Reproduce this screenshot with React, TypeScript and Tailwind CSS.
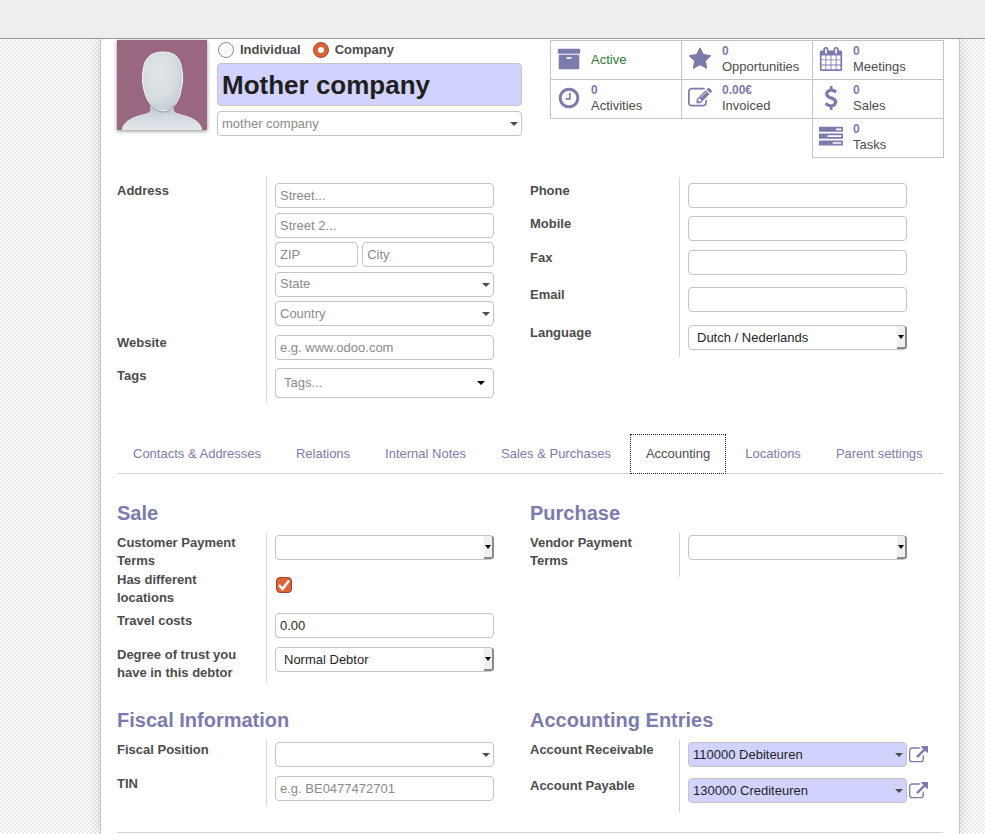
import { useId, type ReactNode } from "react";

const ICONS = {
  archive:
    "M1088 832q0-26-19-45t-45-19h-256q-26 0-45 19t-19 45 19 45 45 19h256q26 0 45-19t19-45zm576-192v960q0 26-19 45t-45 19h-1408q-26 0-45-19t-19-45v-960q0-26 19-45t45-19h1408q26 0 45 19t19 45zm64-448v256q0 26-19 45t-45 19h-1536q-26 0-45-19t-19-45v-256q0-26 19-45t45-19h1536q26 0 45 19t19 45z",
  star: "M1728 647q0 22-26 48l-363 354 86 500q1 7 1 20 0 21-10.5 35.5t-30.5 14.5q-19 0-40-12l-449-236-449 236q-22 12-40 12-21 0-31.5-14.5t-10.5-35.5q0-6 2-20l86-500-364-354q-25-27-25-48 0-37 56-46l502-73 225-455q19-41 49-41t49 41l225 455 502 73q56 9 56 46z",
  clock:
    "M1024 544v448q0 14-9 23t-23 9h-320q-14 0-23-9t-9-23v-64q0-14 9-23t23-9h224v-352q0-14 9-23t23-9h64q14 0 23 9t9 23zm416 352q0-148-73-273t-198-198-273-73-273 73-198 198-73 273 73 273 198 198 273 73 273-73 198-198 73-273zm224 0q0 209-103 385.5t-279.5 279.5-385.5 103-385.5-103-279.5-279.5-103-385.5 103-385.5 279.5-279.5 385.5-103 385.5 103 279.5 279.5 103 385.5z",
  pencil:
    "M888 1184l116-116-152-152-116 116v56h96v96h56zm440-720q-16-16-33 1l-350 350q-17 17-1 33t33-1l350-350q17-17 1-33zm80 594v190q0 119-84.5 203.5t-203.5 84.5h-832q-119 0-203.5-84.5t-84.5-203.5v-832q0-119 84.5-203.5t203.5-84.5h832q63 0 117 25 15 7 18 23 3 17-9 29l-49 49q-14 14-32 8-23-6-45-6h-832q-66 0-113 47t-47 113v832q0 66 47 113t113 47h832q66 0 113-47t47-113v-126q0-13 9-22l64-64q15-15 35-7t20 29zm-96-738l288 288-672 672h-288v-288zm444 132l-92 92-288-288 92-92q28-28 68-28t68 28l152 152q28 28 28 68t-28 68z",
  calendar:
    "M192 1664h288v-288h-288v288zm352 0h320v-288h-320v288zm-352-352h288v-320h-288v320zm352 0h320v-320h-320v320zm-352-384h288v-288h-288v288zm736 736h320v-288h-320v288zm-384-736h320v-288h-320v288zm768 736h288v-288h-288v288zm-384-352h320v-320h-320v320zm-352-864v-288q0-13-9.5-22.5t-22.5-9.5h-64q-13 0-22.5 9.5t-9.5 22.5v288q0 13 9.5 22.5t22.5 9.5h64q13 0 22.5-9.5t9.5-22.5zm736 864h288v-320h-288v320zm-384-384h320v-288h-320v288zm384 0h288v-288h-288v288zm32-480v-288q0-13-9.5-22.5t-22.5-9.5h-64q-13 0-22.5 9.5t-9.5 22.5v288q0 13 9.5 22.5t22.5 9.5h64q13 0 22.5-9.5t9.5-22.5zm384-64v1280q0 52-38 90t-90 38h-1408q-52 0-90-38t-38-90v-1280q0-52 38-90t90-38h128v-96q0-66 47-113t113-47h64q66 0 113 47t47 113v96h384v-96q0-66 47-113t113-47h64q66 0 113 47t47 113v96h128q52 0 90 38t38 90z",
  dollar:
    "M1362 1185q0 153-99.5 263.5t-258.5 136.5v175q0 14-9 23t-23 9h-135q-13 0-22.5-9.5t-9.5-22.5v-175q-66-9-127.5-31t-101.5-44.5-74-48-46.5-37.5-17.5-18q-17-21-2-41l103-135q7-10 23-12 15-2 24 9l2 2q113 99 243 125 37 8 74 8 81 0 142.5-43t61.5-122q0-28-15-53t-33.5-42-58.5-37.5-66-32-80-32.5q-39-16-61.5-25t-61.5-26.5-62.5-31-56.5-35.5-53.5-42.5-43.5-49-35.5-58-21-66.5-8.5-78q0-138 98-242t255-134v-180q0-13 9.5-22.5t22.5-9.5h135q14 0 23 9t9 23v176q57 6 110.5 23t87 33.5 63.5 37.5 39 29 15 14q17 18 5 38l-81 146q-8 15-23 16-14 3-27-7-3-3-14.5-12t-39-26.5-58.5-32-74.5-26-85.5-11.5q-95 0-155 43t-60 111q0 26 8.5 48t29.5 41.5 39.5 33 56 31 60.5 27 70 27.5q53 20 81 31.5t76 35 75.5 42.5 62 50 53 63.5 31.5 76.5 13 94z",
  tasks:
    "M1024 1408h640v-128h-640v128zm-384-512h1024v-128h-1024v128zm640-512h384v-128h-384v128zm512 832v256q0 26-19 45t-45 19h-1664q-26 0-45-19t-19-45v-256q0-26 19-45t45-19h1664q26 0 45 19t19 45zm0-512v256q0 26-19 45t-45 19h-1664q-26 0-45-19t-19-45v-256q0-26 19-45t45-19h1664q26 0 45 19t19 45zm0-512v256q0 26-19 45t-45 19h-1664q-26 0-45-19t-19-45v-256q0-26 19-45t45-19h1664q26 0 45 19t19 45z",
  external:
    "M1408 928v320q0 119-84.5 203.5t-203.5 84.5h-832q-119 0-203.5-84.5t-84.5-203.5v-832q0-119 84.5-203.5t203.5-84.5h704q14 0 23 9t9 23v64q0 14-9 23t-23 9h-704q-66 0-113 47t-47 113v832q0 66 47 113t113 47h832q66 0 113-47t47-113v-320q0-14 9-23t23-9h64q14 0 23 9t9 23zm384-864v512q0 26-19 45t-45 19-45-19l-176-176-652 652q-10 10-23 10t-23-10l-114-114q-10-10-10-23t10-23l652-652-176-176q-19-19-19-45t19-45 45-19h512q26 0 45 19t19 45z",
};

type IconName = keyof typeof ICONS;

function Icon({ name, className }: { name: IconName; className: string }) {
  return (
    <svg viewBox="0 0 1792 1792" className={className} fill="currentColor" aria-hidden="true">
      <path d={ICONS[name]} />
    </svg>
  );
}

const BOX = "rounded-[4px] border border-[#c4c4c4] text-[13px]";

function TextField({
  id,
  label,
  placeholder,
  value,
  width = "w-full",
}: {
  id?: string;
  label?: string;
  placeholder?: string;
  value?: string;
  width?: string;
}) {
  return (
    <input
      id={id}
      type="text"
      aria-label={label}
      placeholder={placeholder}
      defaultValue={value}
      className={`${BOX} ${width} block h-[25px] min-w-0 bg-white px-1 text-[#1f1f1f] placeholder:text-[#8a8a8a]`}
    />
  );
}

/* Drop-down with a small flat caret. */
function Combo({
  id,
  label,
  value,
  tone = "muted",
  tall = false,
}: {
  id?: string;
  label?: string;
  value: string;
  tone?: "muted" | "required";
  tall?: boolean;
}) {
  const colors = tone === "required" ? "bg-[#d2d2ff] text-[#1f1f1f]" : "bg-white text-[#8a8a8a]";
  const size = tall ? "h-[30px] pl-2" : "h-[25px] pl-1";
  return (
    <div className="relative w-full">
      <select id={id} aria-label={label} className={`${BOX} ${colors} ${size} block w-full appearance-none pr-5`}>
        <option>{value}</option>
      </select>
      <svg
        viewBox="0 0 8 4"
        className={
          tall
            ? "pointer-events-none absolute top-[13px] right-[9px] h-1 w-2 text-black"
            : "pointer-events-none absolute top-[11px] right-1 h-1 w-2 text-[#4c4c4c]"
        }
        fill="currentColor"
        aria-hidden="true"
      >
        <path d="M0 0h8L4 4z" />
      </svg>
    </div>
  );
}

/* Drop-down with a bevelled button at its right end. */
function Select({ id, value }: { id?: string; value: string }) {
  return (
    <div className="relative w-full">
      <select id={id} className={`${BOX} block h-[25px] w-full appearance-none bg-white pr-5 pl-2 text-[#1f1f1f]`}>
        <option>{value}</option>
      </select>
      <span className="pointer-events-none absolute top-px right-0 flex h-[23px] w-[10px] items-center justify-center rounded-r-[3px] border-r-2 border-b-2 border-[#8c8c8c] bg-[#f0f0f0]">
        <svg viewBox="0 0 6 4" className="h-1 w-1.5" aria-hidden="true">
          <path d="M0 0h6L3 4z" />
        </svg>
      </span>
    </div>
  );
}

function Group({ className = "", children }: { className?: string; children: ReactNode }) {
  return (
    <div
      className={`self-start bg-[linear-gradient(#d5d5d5,#d5d5d5)] bg-[length:1px_100%] bg-[position:149px_0] bg-no-repeat ${className}`}
    >
      {children}
    </div>
  );
}

function Row({
  label,
  height = "",
  after,
  children,
}: {
  label: string;
  height?: string;
  after?: ReactNode;
  children: (id: string) => ReactNode;
}) {
  const id = useId();
  return (
    <div className={`grid grid-cols-[150px_minmax(0,1fr)_36px] items-start ${height}`}>
      <label htmlFor={id} className="pr-4 font-bold">
        {label}
      </label>
      <div className="pt-px pl-2">{children(id)}</div>
      <div className="pt-[5px] pl-0.5">{after}</div>
    </div>
  );
}

function OpenRecord({ label }: { label: string }) {
  return (
    <button type="button" aria-label={label} className="block text-[#7c7bad]">
      <Icon name="external" className="h-[19px] w-[19px]" />
    </button>
  );
}

function Heading({ children }: { children: ReactNode }) {
  return <h2 className="text-[20px] leading-[39px] font-bold text-[#7c7bad]">{children}</h2>;
}

function Avatar() {
  return (
    <svg
      viewBox="0 0 90 90"
      className="h-[90px] w-[90px] shrink-0 shadow-[0_1px_4px_rgba(0,0,0,0.45)]"
      role="img"
      aria-label="Contact picture"
    >
      <defs>
        <radialGradient id="head" cx="0.4" cy="0.35" r="0.75">
          <stop offset="0" stopColor="#dfe5e8" />
          <stop offset="0.6" stopColor="#d6dce0" />
          <stop offset="1" stopColor="#bcc7cd" />
        </radialGradient>
        <linearGradient id="body" x1="0" y1="0" x2="0" y2="1">
          <stop offset="0" stopColor="#b4c0c8" />
          <stop offset="0.5" stopColor="#d3dae0" />
          <stop offset="1" stopColor="#e3e8eb" />
        </linearGradient>
      </defs>
      <rect width="90" height="90" fill="#99677f" />
      <path
        d="M34 64v5c0 3-2 4-5 5C17 77 7 80 5 90h80c-2-10-12-13-24-16-3-1-5-2-5-5v-5z"
        fill="url(#body)"
        stroke="#e9edf0"
        strokeWidth="0.8"
      />
      <path
        d="M46 12c-13 0-19 7-20 19-1 5-1 12 1 19 2 10 9 21 19 21s17-11 18-21c2-7 2-14 1-19-1-12-6-19-19-19z"
        fill="url(#head)"
        stroke="#f2f5f6"
        strokeWidth="1"
      />
      <path d="M34 65c3 4 7 7 12 7s8-3 11-7" fill="none" stroke="#8b999b" strokeWidth="1" />
    </svg>
  );
}

function KindRadio({ label, checked }: { label: string; checked?: boolean }) {
  return (
    <label className="flex items-center gap-1.5 font-bold">
      <input
        type="radio"
        name="kind"
        defaultChecked={checked}
        className="h-4 w-4 appearance-none rounded-full border border-[#8c8c8c] bg-white checked:border-[#a3431f] checked:bg-[radial-gradient(circle,#fff_0_2.5px,#dd6535_3.5px)]"
      />
      {label}
    </label>
  );
}

const STATS: { icon: IconName; count?: string; label: string; place?: string }[] = [
  { icon: "archive", label: "Active" },
  { icon: "star", count: "0", label: "Opportunities" },
  { icon: "calendar", count: "0", label: "Meetings" },
  { icon: "clock", count: "0", label: "Activities" },
  { icon: "pencil", count: "0.00€", label: "Invoiced" },
  { icon: "dollar", count: "0", label: "Sales" },
  { icon: "tasks", count: "0", label: "Tasks", place: "col-start-3" },
];

const TABS = [
  "Contacts & Addresses",
  "Relations",
  "Internal Notes",
  "Sales & Purchases",
  "Accounting",
  "Locations",
  "Parent settings",
];

export default function App() {
  return (
    <div className="flex min-h-screen flex-col overflow-hidden bg-white bg-[conic-gradient(#ebebeb_25%,#fff_0_50%,#ebebeb_0_75%,#fff_0)] bg-[length:4px_4px] font-['Liberation_Sans',Arial,sans-serif] text-[13px] leading-[18px] text-[#4c4c4c]">
      <header className="relative h-[39px] shrink-0 border-b border-[#999] bg-[#efeded]" />
      <main className="mr-[25px] ml-[100px] flex-1 border-x border-[#c4c4c4] bg-white px-4 pt-px shadow-[0_0_14px_rgba(0,0,0,0.16)]">
        <div className="flex items-start justify-between">
          <div className="flex gap-[10px]">
            <Avatar />
            <div className="w-[305px]">
              <div className="flex h-[23px] items-center gap-3 pb-1 pl-px leading-4">
                <KindRadio label="Individual" />
                <KindRadio label="Company" checked />
              </div>
              <input
                type="text"
                aria-label="Name"
                defaultValue="Mother company"
                className="block h-[43px] w-full rounded-[4px] border border-[#c4c4c4] bg-[#d2d2ff] px-1 pt-0.5 text-[26px] font-bold text-[#1f1f1f]"
              />
              <div className="pt-[5px]">
                <Combo label="Parent company" value="mother company" />
              </div>
            </div>
          </div>
          <div className="-mr-px grid auto-rows-[39px] grid-cols-[repeat(3,131px)] pr-px">
            {STATS.map((s) => (
              <button
                key={s.label}
                type="button"
                className={`-mr-px flex h-10 items-center border border-[#c4c4c4] pb-0.5 pl-1.5 text-left ${s.place ?? ""}`}
              >
                <Icon name={s.icon} className="h-6 w-6 shrink-0 text-[#7c7bad]" />
                <span className="pl-[10px] leading-[15px]">
                  {s.count ? (
                    <>
                      <span className="block text-[12px] font-bold text-[#7c7bad]">{s.count}</span>
                      <span className="block">{s.label}</span>
                    </>
                  ) : (
                    <span className="text-[#2f7a3b]">{s.label}</span>
                  )}
                </span>
              </button>
            ))}
          </div>
        </div>

        <div className="grid grid-cols-2 pt-5">
          <Group className="pt-[5px] pb-[5px]">
            <Row label="Address" height="h-[152px]">
              {(id) => (
                <div className="flex h-[143px] flex-col justify-between">
                  <TextField id={id} placeholder="Street..." />
                  <TextField label="Street 2" placeholder="Street 2..." />
                  <div className="flex gap-1">
                    <TextField label="ZIP" placeholder="ZIP" width="w-[38%]" />
                    <TextField label="City" placeholder="City" width="flex-1" />
                  </div>
                  <Combo label="State" value="State" />
                  <Combo label="Country" value="Country" />
                </div>
              )}
            </Row>
            <Row label="Website" height="h-[33px]">
              {(id) => <TextField id={id} placeholder="e.g. www.odoo.com" />}
            </Row>
            <Row label="Tags">{(id) => <Combo id={id} value="Tags..." tall />}</Row>
          </Group>
          <Group className="pt-[5px] pb-[7px]">
            <Row label="Phone" height="h-[33px]">
              {(id) => <TextField id={id} />}
            </Row>
            <Row label="Mobile" height="h-[34px]">
              {(id) => <TextField id={id} />}
            </Row>
            <Row label="Fax" height="h-[37px]">
              {(id) => <TextField id={id} />}
            </Row>
            <Row label="Email" height="h-[38px]">
              {(id) => <TextField id={id} />}
            </Row>
            <Row label="Language">{(id) => <Select id={id} value="Dutch / Nederlands" />}</Row>
          </Group>
        </div>

        <nav className="mt-[31px] flex gap-[3px] border-b border-[#d5d5d5]" role="tablist">
          {TABS.map((tab) => {
            const active = tab === "Accounting";
            return (
              <button
                key={tab}
                type="button"
                role="tab"
                aria-selected={active}
                className={
                  active
                    ? "-mb-px h-10 border border-dotted border-[#222] bg-white px-[15px] whitespace-nowrap"
                    : "h-[39px] border border-transparent px-[15px] whitespace-nowrap text-[#7c7bad]"
                }
              >
                {tab}
              </button>
            );
          })}
        </nav>

        <div className="grid grid-cols-2 pt-5">
          <section>
            <Heading>Sale</Heading>
            <Group className="h-[150px] pt-px">
              <Row label="Customer Payment Terms" height="h-[37px]">
                {(id) => <Select id={id} value="" />}
              </Row>
              <Row label="Has different locations" height="h-[41px]">
                {(id) => (
                  <span className="relative mt-[5px] block h-4 w-4">
                    <input
                      id={id}
                      type="checkbox"
                      defaultChecked
                      className="peer ml-px block h-4 w-4 appearance-none rounded-[4px] border border-[#8c8c8c] bg-white checked:border-[#9c4526] checked:bg-[#dd6535]"
                    />
                    <svg
                      viewBox="0 0 16 16"
                      className="pointer-events-none absolute top-0 left-px hidden h-4 w-4 peer-checked:block"
                      fill="none"
                      stroke="#fff"
                      strokeWidth="2.4"
                      aria-hidden="true"
                    >
                      <path d="M3 8l3.5 4L13 3.5" />
                    </svg>
                  </span>
                )}
              </Row>
              <Row label="Travel costs" height="h-[34px]">
                {(id) => <TextField id={id} value="0.00" />}
              </Row>
              <Row label="Degree of trust you have in this debtor">
                {(id) => <Select id={id} value="Normal Debtor" />}
              </Row>
            </Group>
          </section>
          <section>
            <Heading>Purchase</Heading>
            <Group className="pt-px pb-[7px]">
              <Row label="Vendor Payment Terms">{(id) => <Select id={id} value="" />}</Row>
            </Group>
          </section>
        </div>

        <div className="grid grid-cols-2 border-b border-[#d5d5d5] pt-[18px] pb-5">
          <section>
            <Heading>Fiscal Information</Heading>
            <Group className="pt-px pb-[5px]">
              <Row label="Fiscal Position" height="h-[34px]">
                {(id) => <Combo id={id} value="" />}
              </Row>
              <Row label="TIN">{(id) => <TextField id={id} placeholder="e.g. BE0477472701" />}</Row>
            </Group>
          </section>
          <section>
            <Heading>Accounting Entries</Heading>
            <Group className="pt-px pb-[9px]">
              <Row label="Account Receivable" height="h-[36px]" after={<OpenRecord label="Open receivable account" />}>
                {(id) => <Combo id={id} value="110000 Debiteuren" tone="required" />}
              </Row>
              <Row label="Account Payable" after={<OpenRecord label="Open payable account" />}>
                {(id) => <Combo id={id} value="130000 Crediteuren" tone="required" />}
              </Row>
            </Group>
          </section>
        </div>
      </main>
    </div>
  );
}
